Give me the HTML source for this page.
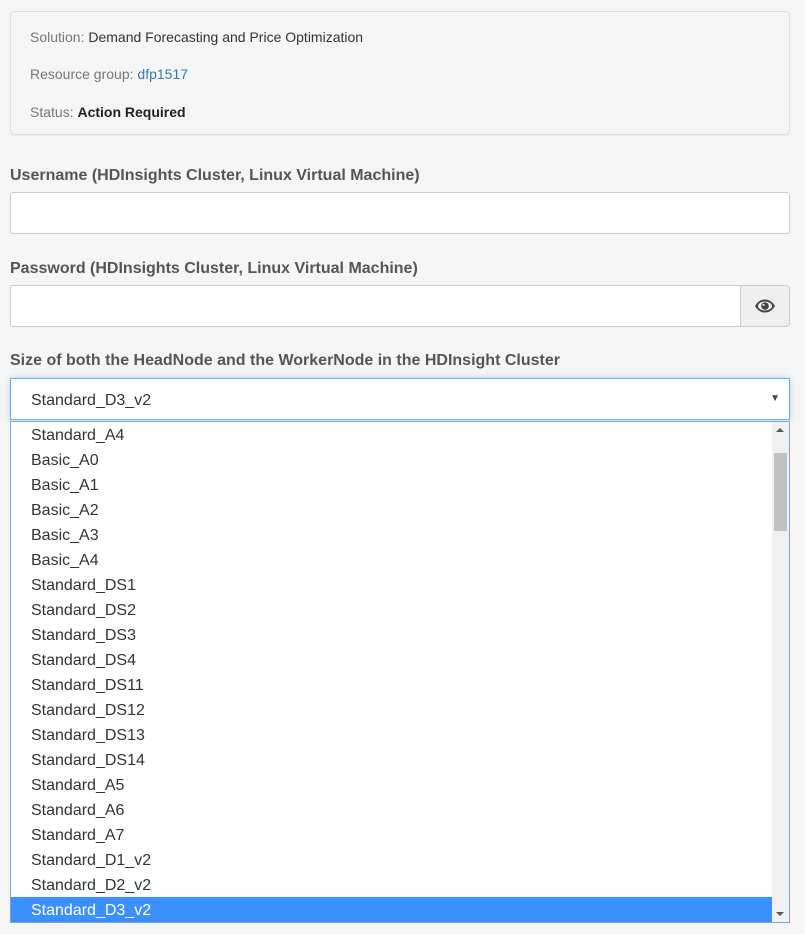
<!DOCTYPE html>
<html><head><meta charset="utf-8"><style>
*{box-sizing:border-box;margin:0;padding:0}
body{width:805px;height:934px;background:#f5f5f5;font-family:"Liberation Sans",sans-serif;position:relative;overflow:hidden;color:#333}
.panel{position:absolute;left:10px;top:11px;width:780px;height:124px;border:1px solid #ddd;border-radius:4px;background:#f5f5f5;box-shadow:0 1px 1px rgba(0,0,0,.05)}
.row{position:absolute;left:19px;font-size:14px;color:#777}
.row b{color:#222}
.v{color:#333}
.lbl{position:absolute;left:10px;font-size:16px;font-weight:bold;color:#555}
.inp{position:absolute;left:10px;height:42px;background:#fff;border:1px solid #ccc;border-radius:3px}
.btn{position:absolute;left:740px;top:285px;width:50px;height:42px;background:#eee;border:1px solid #ccc;border-radius:0 4px 4px 0}
.sel{position:absolute;left:10px;top:378px;width:780px;height:42px;background:#fff;border:1px solid #66afe9;box-shadow:0 0 6px rgba(102,175,233,.5);font-size:16px;padding:13px 20px;color:#333}
.list{position:absolute;left:10px;top:421px;width:780px;height:502px;background:#fff;border:1px solid #7aa7d9}
.it{height:25px;line-height:27px;font-size:16px;padding-left:20px;color:#333;width:762px}
.it.s{background:#3b8ffe;color:#fff}
.sb{position:absolute;right:0;top:0;width:17px;height:500px;background:#f0f0f0}
.th{position:absolute;left:2px;top:31px;width:13px;height:78px;background:#c1c1c1}
</style></head><body>
<div class="panel">
<div class="row" style="top:17px">Solution: <span class="v">Demand Forecasting and Price Optimization</span></div>
<div class="row" style="top:54px">Resource group: <span style="color:#337ab7">dfp1517</span></div>
<div class="row" style="top:92px">Status: <b>Action Required</b></div>
</div>
<div class="lbl" style="top:167px">Username (HDInsights Cluster, Linux Virtual Machine)</div>
<div class="inp" style="top:192px;width:780px"></div>
<div class="lbl" style="top:260px">Password (HDInsights Cluster, Linux Virtual Machine)</div>
<div class="inp" style="top:285px;width:731px;border-radius:3px 0 0 3px"></div>
<div class="btn"><svg width="22" height="16" viewBox="0 0 22 16" style="position:absolute;left:13px;top:12px"><path d="M1 8C4 3 7.5 1.5 11 1.5S18 3 21 8C18 13 14.5 14.5 11 14.5S4 13 1 8Z" fill="#444"/><ellipse cx="11" cy="8" rx="7" ry="4.5" fill="#eee"/><circle cx="11" cy="8" r="3.8" fill="#444"/><circle cx="9.6" cy="6.8" r="1.1" fill="#eee"/></svg></div>
<div class="lbl" style="top:352px">Size of both the HeadNode and the WorkerNode in the HDInsight Cluster</div>
<div class="sel">Standard_D3_v2<span style="position:absolute;right:9px;top:14px;font-size:10px;color:#444">▼</span></div>
<div class="list">
<div class="it">Standard_A4</div><div class="it">Basic_A0</div><div class="it">Basic_A1</div><div class="it">Basic_A2</div><div class="it">Basic_A3</div><div class="it">Basic_A4</div><div class="it">Standard_DS1</div><div class="it">Standard_DS2</div><div class="it">Standard_DS3</div><div class="it">Standard_DS4</div><div class="it">Standard_DS11</div><div class="it">Standard_DS12</div><div class="it">Standard_DS13</div><div class="it">Standard_DS14</div><div class="it">Standard_A5</div><div class="it">Standard_A6</div><div class="it">Standard_A7</div><div class="it">Standard_D1_v2</div><div class="it">Standard_D2_v2</div><div class="it s">Standard_D3_v2</div>
<div class="sb"><div style="position:absolute;left:4px;top:6px;border-left:4px solid transparent;border-right:4px solid transparent;border-bottom:4px solid #555"></div><div class="th"></div><div style="position:absolute;left:4px;bottom:6px;border-left:4px solid transparent;border-right:4px solid transparent;border-top:4px solid #555"></div></div>
</div>
</body></html>
